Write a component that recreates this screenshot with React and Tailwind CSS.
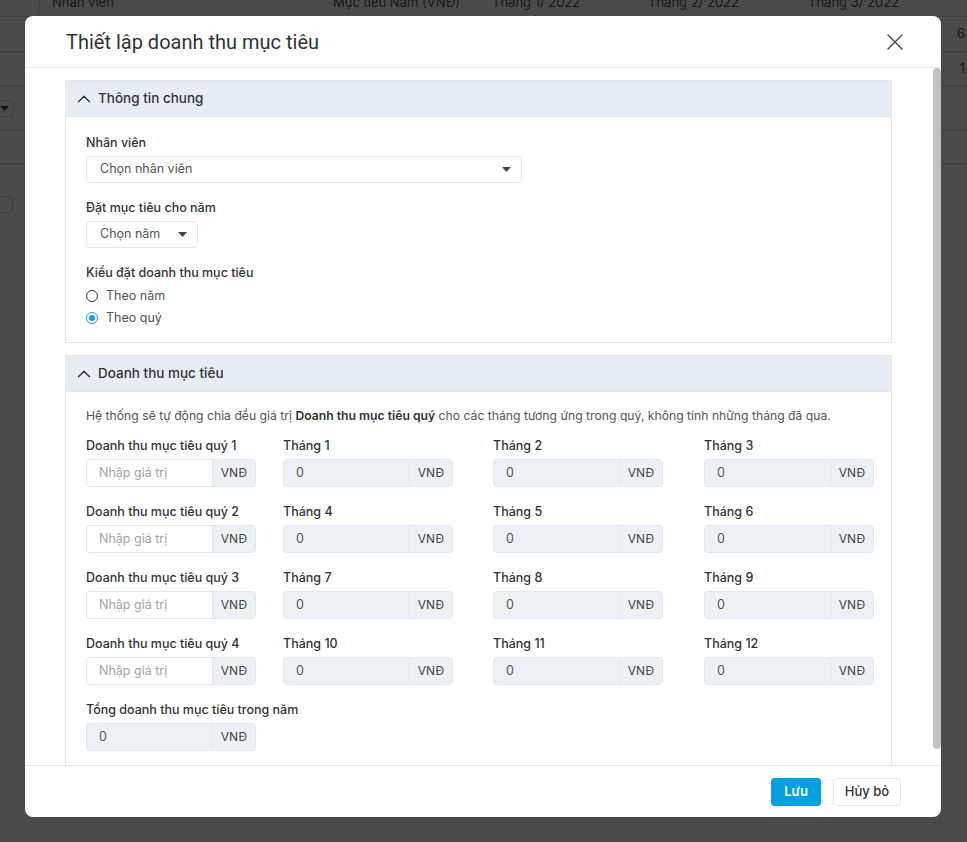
import { ChevronUp, X } from 'lucide-react';

const quarters = [
  { q: 1, months: [1, 2, 3] },
  { q: 2, months: [4, 5, 6] },
  { q: 3, months: [7, 8, 9] },
  { q: 4, months: [10, 11, 12] },
];

function Caret() {
  return (
    <svg width="9" height="5" viewBox="0 0 9 5" className="shrink-0">
      <path d="M0 0h9L4.5 5z" fill="#444" />
    </svg>
  );
}

function MoneyInput({ value, placeholder }) {
  const disabled = value !== undefined;
  return (
    <div
      className={`flex h-[28px] w-[170px] rounded border border-[#e3e7ec] text-[12.5px] ${
        disabled ? 'bg-[#edf1f5]' : 'bg-white'
      }`}
    >
      <div className={`flex flex-1 items-center pl-[12px] ${disabled ? 'text-[#555]' : 'text-[#a3a3a3]'}`}>
        {disabled ? value : placeholder}
      </div>
      <div className="flex w-[43px] items-center justify-center border-l border-[#e3e7ec] bg-[#edf1f5] text-[12px] text-[#444]">
        VNĐ
      </div>
    </div>
  );
}

function Field({ label, children }) {
  return (
    <div className="flex flex-col gap-[3px]">
      <div className="text-[12.5px] font-medium leading-[20px] text-[#333]">{label}</div>
      {children}
    </div>
  );
}

function SectionHeader({ title }) {
  return (
    <div className="flex h-[36px] items-center gap-[3px] border-b border-[#e3e7ec] bg-[#e6edf5] pl-[7px] text-[#333]">
      <ChevronUp size={22} strokeWidth={1.5} />
      <span className="text-[13.5px] font-medium">{title}</span>
    </div>
  );
}

function Radio({ checked, label }) {
  return (
    <label className="flex h-[22px] items-center gap-[8px] text-[12.5px] text-[#555]">
      {checked ? (
        <span className="flex h-[12px] w-[12px] items-center justify-center rounded-full border border-[#1a9be6]">
          <span className="h-[6px] w-[6px] rounded-full bg-[#1a9be6]" />
        </span>
      ) : (
        <span className="h-[12px] w-[12px] rounded-full border border-[#333]" />
      )}
      {label}
    </label>
  );
}

function BackgroundPage() {
  return (
    <div className="h-[842px] w-[967px] overflow-hidden bg-white text-[13px] text-[#555]">
      <div className="-mt-[10px] flex h-[27px] items-center border-b border-[#ddd]">
        <div className="w-[40px] border-r border-[#ddd]">&nbsp;</div>
        <div className="w-[293px] pl-[12px]">Nhân viên</div>
        <div className="w-[159px]">Mục tiêu Năm (VNĐ)</div>
        <div className="w-[156px]">Tháng 1/ 2022</div>
        <div className="w-[160px]">Tháng 2/ 2022</div>
        <div className="flex-1">Tháng 3/ 2022</div>
      </div>
      <div className="flex h-[35px] items-center justify-end border-b border-[#ddd] pr-[2px]">6</div>
      <div className="flex h-[34px] items-center justify-end border-b border-[#ddd] pr-[2px]">1</div>
      <div className="flex h-[45px] items-center border-b border-[#ddd]">
        <div className="-ml-[10px] flex h-[17px] w-[24px] items-center justify-end rounded border border-[#ccc] pr-[4px]">
          <Caret />
        </div>
      </div>
      <div className="h-[33px] border-b border-[#ddd]" />
      <div className="pt-[32px]">
        <div className="-ml-[10px] h-[17px] w-[23px] rounded border border-[#ccc]" />
      </div>
    </div>
  );
}

export default function App() {
  return (
    <div className="relative h-[842px] w-[967px] overflow-hidden" style={{ fontFamily: 'Inter, "Noto Sans", sans-serif' }}>
      <BackgroundPage />

      {/* overlay */}
      <div className="absolute inset-0 bg-black/[0.71]" />

      {/* modal */}
      <div className="absolute left-[25px] top-[16px] flex h-[801px] w-[916px] flex-col overflow-hidden rounded-[8px] bg-white">
        <div className="flex h-[52px] shrink-0 items-center justify-between border-b border-[#e3e7ec] pl-[41px] pr-[32px]">
          <h2 className="text-[20px] text-[#333]" style={{ fontFamily: 'Roboto, "Liberation Sans", sans-serif' }}>
            Thiết lập doanh thu mục tiêu
          </h2>
          <X size={28} strokeWidth={1.2} className="text-[#444]" />
        </div>

        <div className="relative flex-1 overflow-hidden">
          <div className="pb-[12px] pl-[40px] pr-[49px] pt-[12px]">
            <div className="flex flex-col gap-[12px]">
              {/* Thông tin chung */}
              <div className="border border-[#e3e7ec]">
                <SectionHeader title="Thông tin chung" />
                <div className="flex flex-col gap-[15px] px-[20px] pb-[13px] pt-[16px]">
                  <Field label="Nhân viên">
                    <div className="flex h-[27px] w-[436px] items-center justify-between rounded border border-[#e3e7ec] pl-[13px] pr-[10px] text-[12.5px] text-[#555]">
                      Chọn nhân viên
                      <Caret />
                    </div>
                  </Field>
                  <Field label="Đặt mục tiêu cho năm">
                    <div className="flex h-[27px] w-[112px] items-center justify-between rounded border border-[#e3e7ec] pl-[13px] pr-[10px] text-[12.5px] text-[#555]">
                      Chọn năm
                      <Caret />
                    </div>
                  </Field>
                  <div className="flex flex-col">
                    <div className="mb-[2px] text-[12.5px] font-medium leading-[20px] text-[#333]">Kiểu đặt doanh thu mục tiêu</div>
                    <Radio label="Theo năm" />
                    <Radio checked label="Theo quý" />
                  </div>
                </div>
              </div>

              {/* Doanh thu mục tiêu */}
              <div className="border border-[#e3e7ec]">
                <SectionHeader title="Doanh thu mục tiêu" />
                <div className="px-[20px] pb-[18px] pt-[14px]">
                  <p className="mb-[10px] whitespace-nowrap text-[12.2px] leading-[20px] text-[#555]">
                    Hệ thống sẽ tự động chia đều giá trị <span className="font-semibold text-[#333]">Doanh thu mục tiêu quý</span> cho
                    các tháng tương ứng trong quý, không tính những tháng đã qua.
                  </p>
                  <div className="flex flex-col gap-[15px]">
                    {quarters.map((item) => (
                      <div key={item.q} className="grid grid-cols-[197px_210px_211px_1fr]">
                        <Field label={`Doanh thu mục tiêu quý ${item.q}`}>
                          <MoneyInput placeholder="Nhập giá trị" />
                        </Field>
                        {item.months.map((m) => (
                          <Field key={m} label={`Tháng ${m}`}>
                            <MoneyInput value="0" />
                          </Field>
                        ))}
                      </div>
                    ))}
                    <Field label="Tổng doanh thu mục tiêu trong năm">
                      <MoneyInput value="0" />
                    </Field>
                  </div>
                </div>
              </div>
            </div>
          </div>
          {/* scrollbar thumb */}
          <div className="absolute right-0 top-0 h-[681px] w-[8px] rounded-full bg-[#c1c1c1]" />
        </div>

        <div className="flex h-[52px] shrink-0 items-center justify-end gap-[12px] border-t border-[#e3e7ec] pr-[40px]">
          <button className="h-[28px] w-[50px] rounded bg-[#049fe0] text-[13px] font-semibold text-white">Lưu</button>
          <button className="h-[28px] w-[68px] rounded border border-[#e3e7ec] text-[13px] font-medium text-[#333]">Hủy bỏ</button>
        </div>
      </div>
    </div>
  );
}
